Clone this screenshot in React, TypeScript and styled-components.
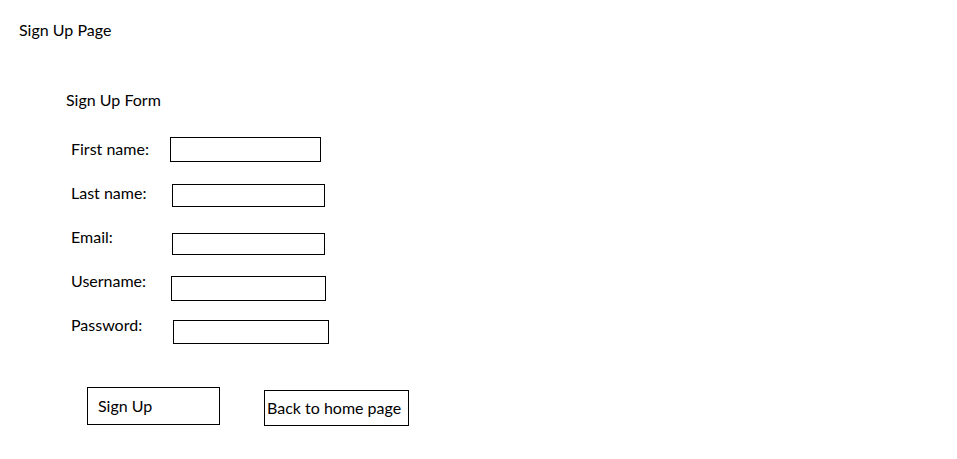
import React from "react";
import styled, { createGlobalStyle } from "styled-components";

const GlobalStyle = createGlobalStyle`
  html, body {
    margin: 0;
    padding: 0;
    background: #ffffff;
  }
  body {
    font-family: Lato, "Open Sans", "Liberation Sans", sans-serif;
    font-size: 16px;
    line-height: 20px;
    color: #000000;
  }
  * { box-sizing: border-box; }
`;

const Page = styled.div`
  width: 957px;
  height: 459px;
  padding: 20px 0 0 19px;
  display: flex;
  flex-direction: column;
`;

const PageTitle = styled.div`
  height: 20px;
`;

const FormSection = styled.section`
  margin: 50px 0 0 47px;
  display: flex;
  flex-direction: column;
`;

const FormTitle = styled.div`
  height: 20px;
`;

const Fields = styled.div`
  margin: 29px 0 0 5px;
  display: flex;
  flex-direction: column;
`;

const Row = styled.div`
  height: 44px;
  display: flex;
  align-items: flex-start;
`;

const Label = styled.label`
  width: 99px;
  height: 20px;
  flex: none;
`;

const Field = styled.input<{ $dx: number; $dy: number; $w: number; $h: number }>`
  margin: ${(p) => p.$dy}px 0 0 ${(p) => p.$dx}px;
  width: ${(p) => p.$w}px;
  height: ${(p) => p.$h}px;
  border: 1px solid #000000;
  border-radius: 0;
  background: #ffffff;
  padding: 0;
  font: inherit;
  outline: none;
`;

const Actions = styled.div`
  margin: 28px 0 0 21px;
  display: flex;
  align-items: flex-start;
  gap: 44px;
`;

const Button = styled.button<{ $w: number; $h: number; $dy: number; $pl: number; $pt: number }>`
  margin-top: ${(p) => p.$dy}px;
  width: ${(p) => p.$w}px;
  height: ${(p) => p.$h}px;
  padding: ${(p) => p.$pt}px 0 0 ${(p) => p.$pl}px;
  border: 1px solid #000000;
  border-radius: 0;
  background: #ffffff;
  color: #000000;
  font: inherit;
  text-align: left;
  display: flex;
  align-items: flex-start;
  white-space: nowrap;
  cursor: pointer;
`;

const fields = [
  { id: "first", label: "First name:", dx: 0, dy: -2, w: 151, h: 25, type: "text" },
  { id: "last", label: "Last name:", dx: 2, dy: 1, w: 153, h: 23, type: "text" },
  { id: "email", label: "Email:", dx: 2, dy: 6, w: 153, h: 22, type: "email" },
  { id: "username", label: "Username:", dx: 1, dy: 5, w: 155, h: 25, type: "text" },
  { id: "password", label: "Password:", dx: 3, dy: 5, w: 156, h: 24, type: "password" },
];

export default function App() {
  return (
    <>
      <GlobalStyle />
      <Page>
        <PageTitle>Sign Up Page</PageTitle>
        <FormSection>
          <FormTitle>Sign Up Form</FormTitle>
          <Fields>
            {fields.map((f) => (
              <Row key={f.id}>
                <Label htmlFor={f.id}>{f.label}</Label>
                <Field id={f.id} type={f.type} $dx={f.dx} $dy={f.dy} $w={f.w} $h={f.h} />
              </Row>
            ))}
          </Fields>
          <Actions>
            <Button $w={133} $h={38} $dy={0} $pl={10} $pt={8}>Sign Up</Button>
            <Button $w={145} $h={36} $dy={3} $pl={2} $pt={7}>Back to home page</Button>
          </Actions>
        </FormSection>
      </Page>
    </>
  );
}
